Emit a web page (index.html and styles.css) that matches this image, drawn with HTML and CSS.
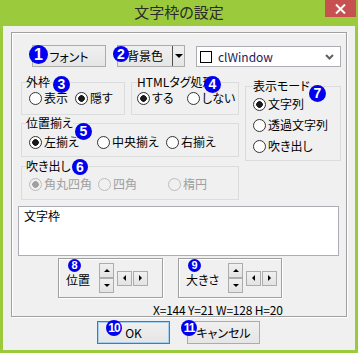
FILE: index.html
```html
<!DOCTYPE html>
<html lang="ja">
<head>
    <meta charset="UTF-8">
    <meta name="viewport" content="width=device-width, initial-scale=1.0">
    <title>文字枠の設定</title>
    <link rel="stylesheet" href="styles.css">
</head>
<body>
    <div class="window">
        <div class="titlebar">
            <span></span>
            <span class="title">文字枠の設定</span>
            <span class="close">
                <svg width="11" height="10" viewBox="0 0 11 10"><path d="M1 0.5 L10 9.5 M10 0.5 L1 9.5" stroke="#fff" stroke-width="2"/></svg>
            </span>
        </div>
        <div class="client">
            <div class="frame">
                <div class="row-top">
                    <button class="btn btn-font">フォント</button>
                    <div class="btn btn-split">
                        <span class="split-main">背景色</span>
                        <span class="split-arrow"></span>
                    </div>
                    <div class="combo">
                        <span class="swatch"></span>
                        <span class="combo-text">clWindow</span>
                        <svg class="chevron" width="9" height="6" viewBox="0 0 9 6"><path d="M1 1 L4.5 4.5 L8 1" fill="none" stroke="#606060" stroke-width="2"/></svg>
                    </div>
                </div>
                <div class="mid">
                    <div class="col-left">
                        <div class="pair">
                            <fieldset class="group g-waku">
                                <legend>外枠</legend>
                                <div class="radios">
                                    <span class="radio">表示</span>
                                    <span class="radio checked">隠す</span>
                                </div>
                            </fieldset>
                            <fieldset class="group g-html">
                                <legend>HTMLタグ処理</legend>
                                <div class="radios">
                                    <span class="radio checked">する</span>
                                    <span class="radio">しない</span>
                                </div>
                            </fieldset>
                        </div>
                        <fieldset class="group g-align">
                            <legend>位置揃え</legend>
                            <div class="radios">
                                <span class="radio checked">左揃え</span>
                                <span class="radio">中央揃え</span>
                                <span class="radio">右揃え</span>
                            </div>
                        </fieldset>
                        <fieldset class="group g-balloon">
                            <legend>吹き出し</legend>
                            <div class="radios">
                                <span class="radio checked disabled">角丸四角</span>
                                <span class="radio disabled">四角</span>
                                <span class="radio disabled">楕円</span>
                            </div>
                        </fieldset>
                    </div>
                    <fieldset class="group g-mode">
                        <legend>表示モード</legend>
                        <div class="radios">
                            <span class="radio checked">文字列</span>
                            <span class="radio">透過文字列</span>
                            <span class="radio">吹き出し</span>
                        </div>
                    </fieldset>
                </div>
                <div class="textarea">文字枠</div>
                <div class="row-spin">
                    <div class="spinbox spin-pos">
                        <span class="spin-label">位置</span>
                        <div class="updown">
                            <span class="sbtn"><i class="tri up"></i></span>
                            <span class="sbtn"><i class="tri down"></i></span>
                        </div>
                        <div class="leftright">
                            <span class="sbtn"><i class="tri left"></i></span>
                            <span class="sbtn"><i class="tri right"></i></span>
                        </div>
                    </div>
                    <div class="spinbox spin-size">
                        <span class="spin-label">大きさ</span>
                        <div class="updown">
                            <span class="sbtn"><i class="tri up"></i></span>
                            <span class="sbtn"><i class="tri down"></i></span>
                        </div>
                        <div class="leftright">
                            <span class="sbtn"><i class="tri left"></i></span>
                            <span class="sbtn"><i class="tri right"></i></span>
                        </div>
                    </div>
                </div>
                <div class="status">X=144 Y=21 W=128 H=20</div>
            </div>
            <div class="row-buttons">
                <button class="btn btn-ok">OK</button>
                <button class="btn btn-cancel">キャンセル</button>
            </div>
        </div>

        <span class="badge b1">1</span>
        <span class="badge b2">2</span>
        <span class="badge b3">3</span>
        <span class="badge b4">4</span>
        <span class="badge b5">5</span>
        <span class="badge b6">6</span>
        <span class="badge b7">7</span>
        <span class="badge b8">8</span>
        <span class="badge b9">9</span>
        <span class="badge b10">10</span>
        <span class="badge b11">11</span>
    </div>
</body>
</html>
```

FILE: styles.css
```css
body {
    margin: 0;
    font-family: "Noto Sans CJK JP", "Noto Sans", sans-serif;
    font-size: 12px;
    font-feature-settings: "palt";
    color: #000;
}
.window {
    position: relative;
    width: 358px;
    height: 353px;
    background: #9bcb3c;
    display: flex;
    flex-direction: column;
}
.titlebar {
    height: 26px;
    display: grid;
    grid-template-columns: 1fr auto 1fr;
    align-items: start;
}
.title {
    font-size: 15px;
    line-height: 24px;
    color: #2a2a2a;
}
.close {
    justify-self: end;
    margin-right: 2px;
    width: 31px;
    height: 17px;
    background: #c75050;
    display: flex;
    align-items: center;
    justify-content: center;
}
.client {
    flex: 1;
    margin: 0 3px 3px;
    background: #f0f0f0;
}
.frame {
    margin: 6px 0 0 8px;
    width: 336px;
    height: 285px;
    box-sizing: border-box;
    border: 1px solid #a0a0a0;
    box-shadow: 1px 1px 0 #fff, inset 1px 1px 0 #fff;
}
.btn {
    box-sizing: border-box;
    height: 22px;
    padding: 0;
    border: 1px solid #acacac;
    background: linear-gradient(#f0f0f0, #e5e5e5);
    font: inherit;
    color: #000;
    display: flex;
    align-items: center;
    justify-content: center;
}
.row-top {
    margin-top: 12px;
    padding-left: 20px;
    display: flex;
    align-items: flex-start;
}
.btn-font {
    width: 74px;
}
.btn-split {
    width: 68px;
    margin-left: 11px;
}
.split-main {
    flex: 1;
    text-align: center;
    line-height: 20px;
    border-right: 1px solid #505050;
}
.split-arrow {
    width: 11px;
    display: flex;
    justify-content: center;
}
.split-arrow::before {
    content: "";
    border-left: 4px solid transparent;
    border-right: 4px solid transparent;
    border-top: 4px solid #000;
}
.combo {
    box-sizing: border-box;
    width: 145px;
    height: 21px;
    margin: 1px 0 0 11px;
    background: #fff;
    border: 1px solid #abadb3;
    display: flex;
    align-items: center;
    padding: 0 6px 0 3px;
}
.swatch {
    box-sizing: border-box;
    width: 12px;
    height: 12px;
    border: 1px solid #000;
    background: #fff;
}
.combo-text {
    flex: 1;
    margin-left: 6px;
    color: #1c2058;
}
.mid {
    display: flex;
    align-items: flex-start;
    margin-left: 9px;
}
.col-left {
    width: 218px;
    margin-top: 8px;
}
.pair {
    display: flex;
}
.group {
    box-sizing: border-box;
    margin: 0;
    min-width: 0;
    border: 1px solid #dcdcdc;
    padding: 0 0 0 7px;
}
.group legend {
    padding: 0;
    margin-left: -3px;
    line-height: 14px;
}
.radios {
    display: grid;
    line-height: 14px;
}
.radio {
    display: flex;
    align-items: center;
    gap: 2px;
    white-space: nowrap;
}
.radio::before {
    content: "";
    box-sizing: border-box;
    width: 13px;
    height: 13px;
    border-radius: 50%;
    border: 1px solid #333;
    background: #fff;
}
.radio.checked::before {
    background: radial-gradient(circle, #1a1a1a 0 3px, #fff 3.6px);
}
.radio.disabled {
    color: #a0a0a0;
}
.radio.disabled::before {
    border-color: #bcbcbc;
    background: #f0f0f0;
}
.radio.checked.disabled::before {
    background: radial-gradient(circle, #a0a0a0 0 3px, #f0f0f0 3.6px);
}
.g-waku {
    width: 104px;
    height: 40px;
    padding-top: 2px;
}
.g-waku .radios {
    grid-template-columns: 46px auto;
}
.g-html {
    width: 108px;
    height: 40px;
    margin-left: 6px;
    padding-top: 2px;
    padding-left: 5px;
}
.g-html legend {
    margin-left: 0;
}
.g-html .radios {
    grid-template-columns: 50px auto;
}
.g-align {
    width: 218px;
    height: 41px;
    margin-top: 1px;
    padding-top: 5px;
}
.g-align .radios {
    grid-template-columns: 68px 69px auto;
}
.g-balloon {
    width: 218px;
    height: 41px;
    margin-top: 2px;
    padding-top: 4px;
}
.g-balloon .radios {
    grid-template-columns: 69px 70px auto;
}
.g-mode {
    width: 96px;
    height: 82px;
    margin: 12px 0 0 6px;
    padding-top: 4px;
}
.g-mode legend {
    margin-left: 0;
}
.g-mode .radios {
    row-gap: 7px;
}
.textarea {
    box-sizing: border-box;
    width: 321px;
    height: 50px;
    margin: 6px 0 0 6px;
    background: #fff;
    border: 1px solid #abadb3;
    padding: 1px 5px;
    line-height: 16px;
}
.row-spin {
    display: flex;
    margin: 2px 0 0 46px;
}
.spinbox {
    box-sizing: border-box;
    height: 40px;
    border: 1px solid #a0a0a0;
    box-shadow: 1px 1px 0 #fff, inset 1px 1px 0 #fff;
    display: flex;
    align-items: center;
    padding-left: 7px;
}
.spin-pos {
    width: 105px;
}
.spin-size {
    width: 104px;
    margin-left: 15px;
}
.spin-label {
    padding-top: 3px;
}
.spin-pos .spin-label {
    width: 33px;
}
.spin-size .spin-label {
    width: 42px;
}
.updown {
    display: flex;
    flex-direction: column;
}
.leftright {
    display: flex;
    gap: 1px;
    margin-left: 3px;
}
.sbtn {
    box-sizing: border-box;
    width: 15px;
    height: 15px;
    border: 1px solid #acacac;
    background: linear-gradient(#f0f0f0, #e3e3e3);
    display: flex;
    align-items: center;
    justify-content: center;
}
.tri {
    width: 0;
    height: 0;
}
.tri.up {
    border-left: 3px solid transparent;
    border-right: 3px solid transparent;
    border-bottom: 3px solid #000;
}
.tri.down {
    border-left: 3px solid transparent;
    border-right: 3px solid transparent;
    border-top: 3px solid #000;
}
.tri.left {
    border-top: 3px solid transparent;
    border-bottom: 3px solid transparent;
    border-right: 3px solid #000;
}
.tri.right {
    border-top: 3px solid transparent;
    border-bottom: 3px solid transparent;
    border-left: 3px solid #000;
}
.status {
    margin-top: 5px;
    padding-left: 141px;
    line-height: 14px;
    letter-spacing: -0.2px;
}
.row-buttons {
    display: flex;
    margin: 4px 0 0 94px;
}
.btn-ok,
.btn-cancel {
    width: 73px;
    height: 23px;
}
.btn-ok {
    border-color: #3c7fb1;
    box-shadow: inset 0 0 0 1px #a6d0f2;
}
.btn-cancel {
    margin-left: 17px;
}
.badge {
    position: absolute;
    width: 17px;
    height: 17px;
    border-radius: 50%;
    background: #0000ee;
    color: #fff;
    font-family: "Liberation Sans", Arial, sans-serif;
    font-weight: bold;
    font-size: 14px;
    line-height: 17px;
    text-align: center;
}
.b1 { left: 29px; top: 45px; width: 19px; height: 19px; line-height: 19px; font-size: 16px; }
.b2 { left: 113px; top: 46px; width: 16px; height: 16px; line-height: 16px; }
.b3 { left: 53px; top: 76px; }
.b4 { left: 204px; top: 76px; }
.b5 { left: 75px; top: 123px; }
.b6 { left: 72px; top: 159px; width: 16px; height: 16px; line-height: 16px; }
.b7 { left: 309px; top: 85px; }
.b8 { left: 68px; top: 259px; width: 13px; height: 13px; line-height: 13px; font-size: 11px; }
.b9 { left: 188px; top: 259px; width: 13px; height: 13px; line-height: 13px; font-size: 11px; }
.b10 { left: 106px; top: 320px; width: 16px; height: 16px; line-height: 16px; font-size: 12px; letter-spacing: -1px; }
.b11 { left: 181px; top: 320px; width: 16px; height: 16px; line-height: 16px; font-size: 12px; letter-spacing: -1px; }
```
